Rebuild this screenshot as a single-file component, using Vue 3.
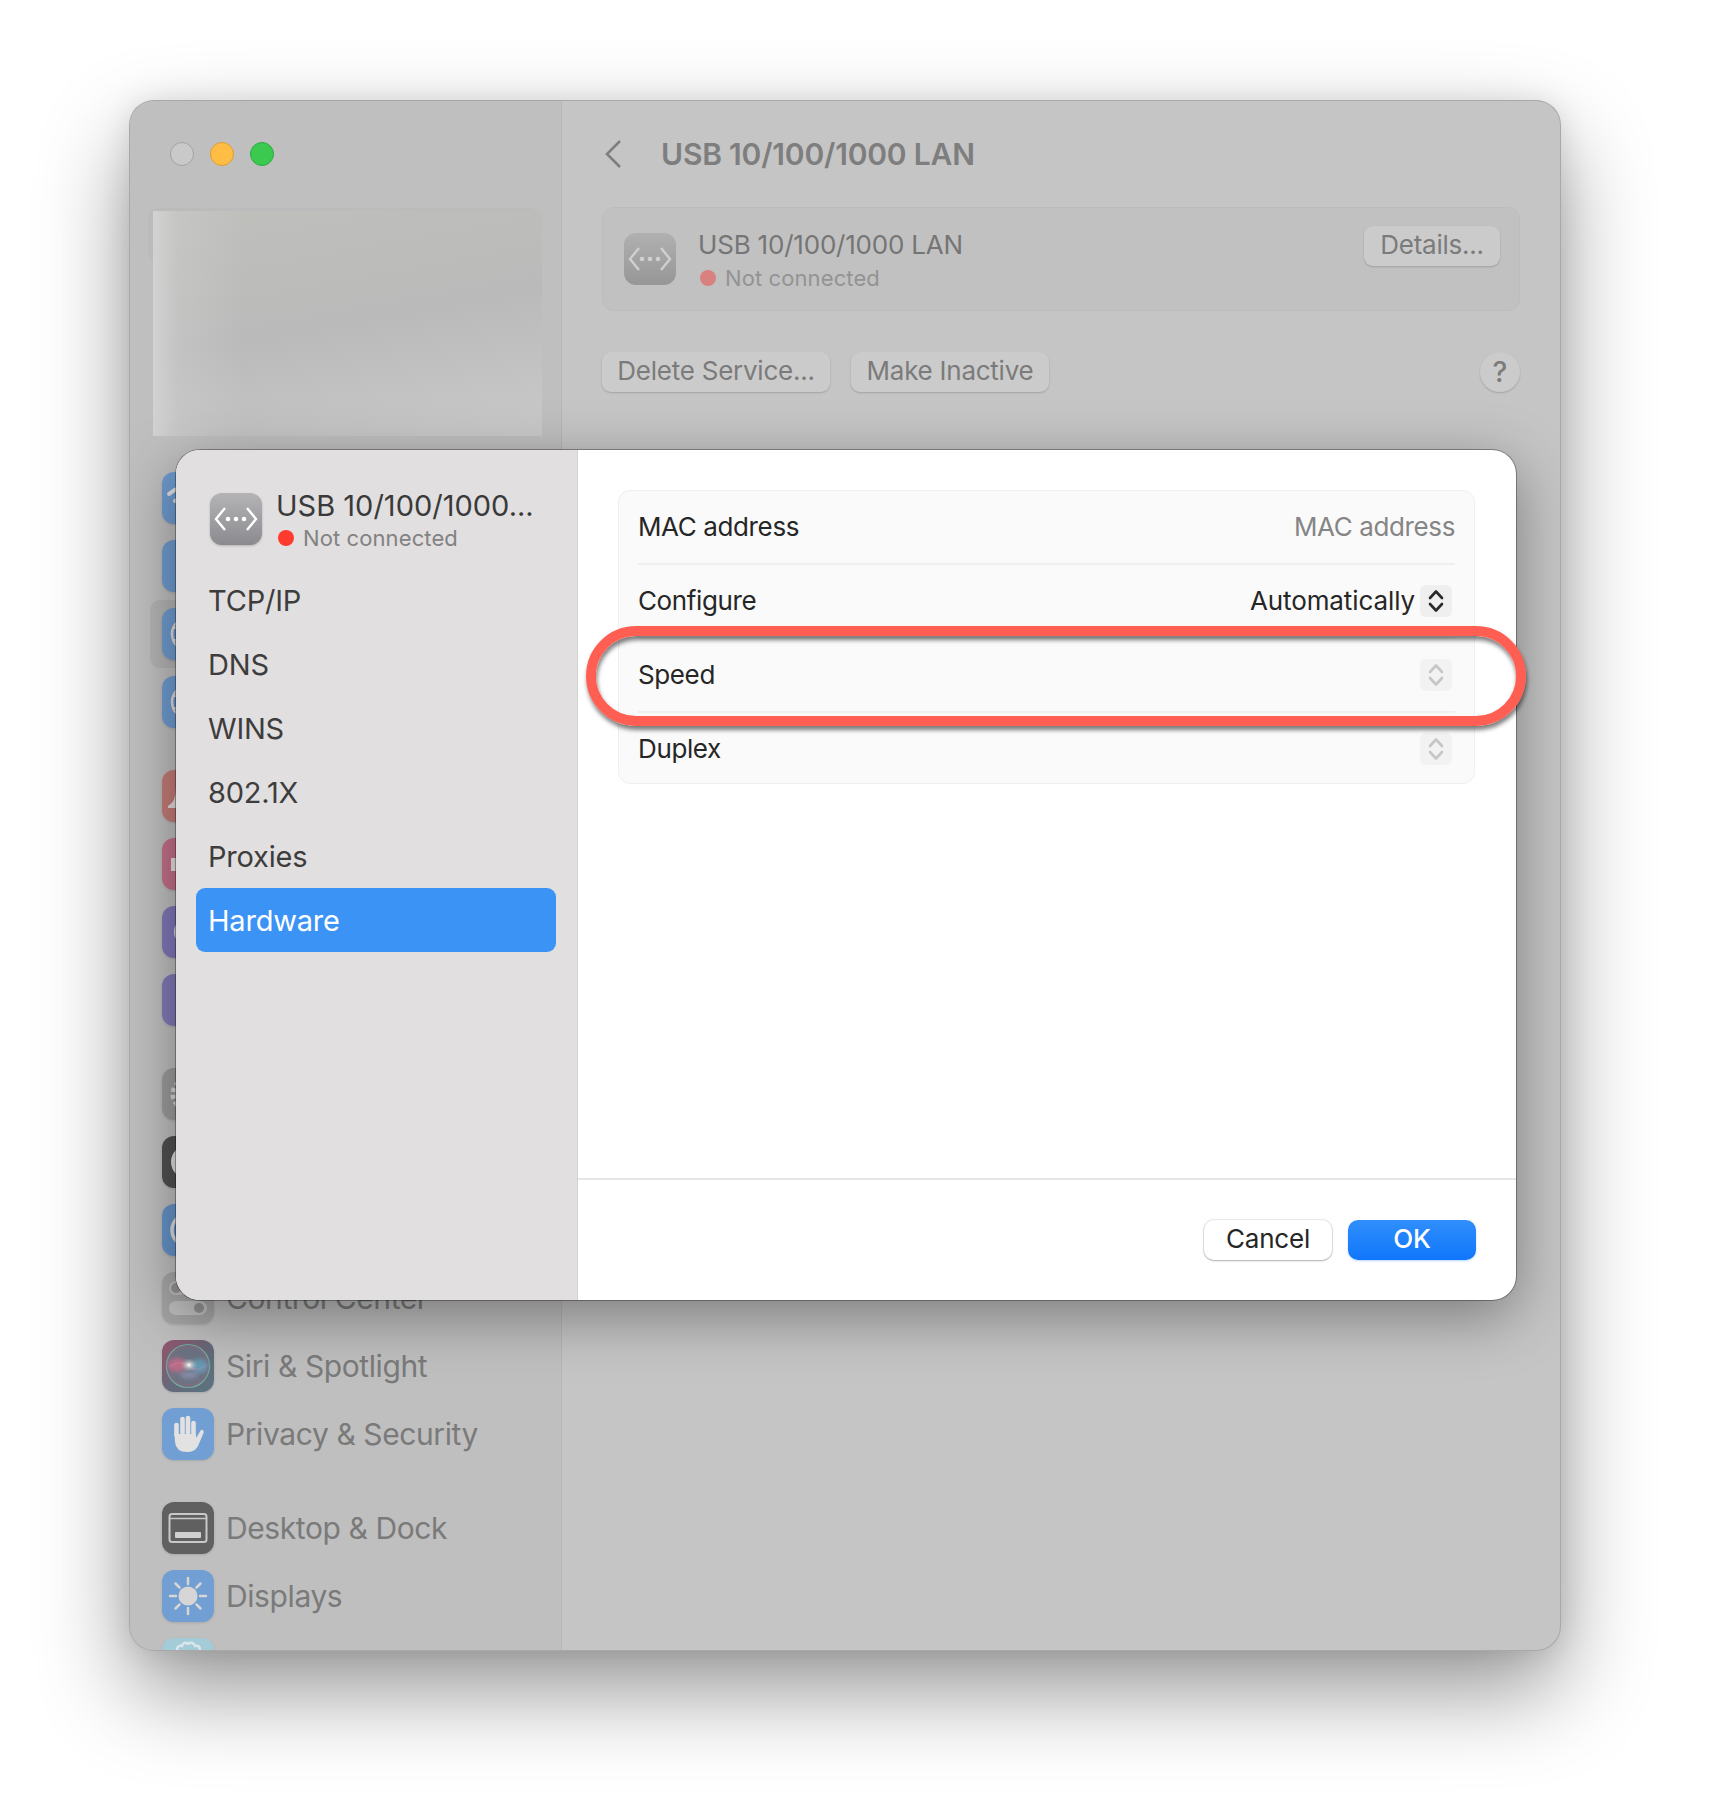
<template>
  <div class="page">
    <div class="window">
      <!-- settings sidebar, dimmed behind the sheet -->
      <aside class="sidebar">
        <div class="lights">
          <span class="light off"></span>
          <span class="light min"></span>
          <span class="light max"></span>
        </div>
        <div class="account">
          <div class="account-under"></div>
          <div class="account-blur"></div>
        </div>
        <div class="nav">
          <div v-for="(group, g) in navGroups" :key="g" class="nav-group">
            <div v-for="item in group" :key="item.icon + item.color" class="nav-row" :class="{ current: item.current }">
              <svg class="nav-icon" width="52" height="52" viewBox="0 0 52 52">
                <defs v-if="item.icon === 'siri'">
                  <linearGradient id="siriBg" x1="0" y1="0" x2="1" y2="1">
                    <stop offset="0" stop-color="#96546c" />
                    <stop offset="0.55" stop-color="#646a7a" />
                    <stop offset="1" stop-color="#5a7480" />
                  </linearGradient>
                  <filter id="siriBlur" x="-30%" y="-30%" width="160%" height="160%">
                    <feGaussianBlur stdDeviation="2.2" />
                  </filter>
                </defs>
                <rect width="52" height="52" rx="12" :fill="item.icon === 'siri' ? 'url(#siriBg)' : item.color" />
                <template v-if="item.icon === 'wifi'">
                  <path d="M7 22 Q26 6 45 22M13 29 Q26 18 39 29" fill="none" stroke="#e0e0e0" stroke-width="4" stroke-linecap="round" />
                  <circle cx="26" cy="37" r="4" fill="#e0e0e0" />
                </template>
                <template v-else-if="item.icon === 'globe'">
                  <circle cx="26" cy="26" r="16" fill="none" stroke="#dcdcdc" stroke-width="2.5" />
                  <path d="M10 20 H42M10 32 H42M26 10 Q14 26 26 42M26 10 Q38 26 26 42" fill="none" stroke="#dcdcdc" stroke-width="2" />
                </template>
                <path v-else-if="item.icon === 'bell'" d="M6 36 Q14 32 14 18 H26 V38 H6 Z" fill="#e6dcdc" />
                <rect v-else-if="item.icon === 'sound'" x="9" y="20" width="18" height="13" fill="#e8dfe2" />
                <circle v-else-if="item.icon === 'moon'" cx="26" cy="26" r="14" fill="#dcdae4" />
                <template v-else-if="item.icon === 'gear'">
                  <circle cx="26" cy="26" r="15" fill="none" stroke="#d8d8d8" stroke-width="5" stroke-dasharray="4 3" />
                  <circle cx="26" cy="26" r="11" fill="none" stroke="#d8d8d8" stroke-width="3" />
                </template>
                <circle v-else-if="item.icon === 'appearance'" cx="26" cy="26" r="17" fill="#dedede" />
                <circle v-else-if="item.icon === 'access'" cx="26" cy="26" r="16" fill="none" stroke="#dcdcdc" stroke-width="3.5" />
                <template v-else-if="item.icon === 'control'">
                  <rect x="7" y="9" width="38" height="14" rx="7" fill="#bdbdbd" />
                  <circle cx="14" cy="16" r="5" fill="#929292" />
                  <rect x="7" y="29" width="38" height="14" rx="7" fill="#c0c0c0" />
                  <circle cx="37" cy="36" r="5" fill="#929292" />
                </template>
                <template v-else-if="item.icon === 'siri'">
                  <circle cx="26" cy="26" r="21.5" fill="#6b7382" stroke="#7aa79c" stroke-width="1.2" />
                  <circle cx="26" cy="26" r="19" fill="none" stroke="#a85f7e" stroke-width="1" opacity="0.6" />
                  <g filter="url(#siriBlur)">
                    <ellipse cx="15" cy="25" rx="9" ry="7" fill="#bb6c88" />
                    <ellipse cx="38" cy="26" rx="8" ry="7" fill="#6699b4" />
                    <ellipse cx="27" cy="35" rx="9" ry="3" fill="#8a8fb0" />
                  </g>
                  <path d="M8 27 Q17 19 26 26 T44 25" fill="none" stroke="#d88aa6" stroke-width="1" opacity="0.5" />
                  <ellipse cx="27" cy="25" rx="5" ry="3.4" fill="#e6e6e6" filter="url(#siriBlur)" />
                  <circle cx="27" cy="25" r="1.8" fill="#eeeeee" />
                </template>
                <template v-else-if="item.icon === 'hand'">
                  <path d="M14.5 27 V17M20.5 25 V11M26 25 V10M31.5 26 V15" stroke="#e2e2e2" stroke-width="4.6" stroke-linecap="round" fill="none" />
                  <path d="M12.5 26 H34 V30 L39 22 Q42 21 41.5 25 L36 38 Q33 44 25 44 Q14 44 13 34 Z" fill="#e2e2e2" />
                </template>
                <template v-else-if="item.icon === 'dock'">
                  <rect x="7.5" y="12" width="37" height="28" rx="2.5" fill="none" stroke="#c8c8c8" stroke-width="2" />
                  <path d="M8 16.5 H44" stroke="#c8c8c8" stroke-width="1.5" />
                  <rect x="13" y="30" width="26" height="6" rx="1" fill="#d0d0d0" />
                </template>
                <template v-else-if="item.icon === 'sun'">
                  <circle cx="26" cy="26" r="9.5" fill="#d6d6d6" />
                  <path d="M26 8 V14M26 38 V44M8 26 H14M38 26 H44M13.5 13.5 L17.5 17.5M34.5 34.5 L38.5 38.5M38.5 13.5 L34.5 17.5M17.5 34.5 L13.5 38.5" stroke="#d6d6d6" stroke-width="2.5" stroke-linecap="round" />
                </template>
                <path v-else-if="item.icon === 'flower'" d="M15 12 Q15 7 20 8 Q22 3 26 6 Q31 3 33 8 Q38 7 38 12" fill="none" stroke="#dbe6ea" stroke-width="2.5" />
              </svg>
              <span v-if="item.label" class="nav-label">{{ item.label }}</span>
            </div>
          </div>
        </div>
      </aside>

      <!-- network detail pane, dimmed too -->
      <main class="detail">
        <div class="detail-head">
          <svg class="back" width="20" height="32" viewBox="0 0 20 32">
            <path d="M17 3 L4 16 L17 29" fill="none" stroke="#7e7e7e" stroke-width="2.6" />
          </svg>
          <h1>USB 10/100/1000 LAN</h1>
        </div>
        <div class="service-card">
          <svg width="52" height="52" viewBox="0 0 52 52" class="service-icon">
            <defs>
              <linearGradient id="dimIcon" x1="0" y1="0" x2="0" y2="1">
                <stop offset="0" stop-color="#b0b0b0" />
                <stop offset="1" stop-color="#969696" />
              </linearGradient>
            </defs>
            <rect width="52" height="52" rx="12" fill="url(#dimIcon)" />
            <path d="M15 15 L6 26 L15 37M37 15 L46 26 L37 37" fill="none" stroke="#d0d0d0" stroke-width="2.4" />
            <circle cx="18" cy="26" r="2.3" fill="#d0d0d0" />
            <circle cx="26" cy="26" r="2.3" fill="#d0d0d0" />
            <circle cx="34" cy="26" r="2.3" fill="#d0d0d0" />
          </svg>
          <div class="service-text">
            <div class="service-name">USB 10/100/1000 LAN</div>
            <div class="service-status"><span class="dot"></span>Not connected</div>
          </div>
          <button class="dim-btn details">Details...</button>
        </div>
        <div class="actions">
          <button class="dim-btn delete">Delete Service...</button>
          <button class="dim-btn inactive">Make Inactive</button>
          <button class="help">?</button>
        </div>
      </main>

      <!-- hardware sheet -->
      <div class="sheet">
        <div class="sheet-side">
          <div class="sheet-head">
            <svg width="52" height="52" viewBox="0 0 52 52" class="sheet-icon">
              <defs>
                <linearGradient id="liveIcon" x1="0" y1="0" x2="0" y2="1">
                  <stop offset="0" stop-color="#b4b4b7" />
                  <stop offset="1" stop-color="#8b8b8f" />
                </linearGradient>
              </defs>
              <rect width="52" height="52" rx="12" fill="url(#liveIcon)" />
              <path d="M15 15 L6 26 L15 37M37 15 L46 26 L37 37" fill="none" stroke="#fff" stroke-width="2.4" />
              <circle cx="18" cy="26" r="2.3" fill="#fff" />
              <circle cx="26" cy="26" r="2.3" fill="#fff" />
              <circle cx="34" cy="26" r="2.3" fill="#fff" />
            </svg>
            <div>
              <div class="sheet-name">USB 10/100/1000...</div>
              <div class="sheet-status"><span class="dot live"></span>Not connected</div>
            </div>
          </div>
          <div
            v-for="tab in tabs"
            :key="tab"
            class="tab"
            :class="{ active: tab === 'Hardware' }"
          >{{ tab }}</div>
        </div>

        <div class="sheet-main">
          <div class="form-wrap">
            <div class="form-card">
              <div v-for="row in rows" :key="row.label" class="form-row">
                <span class="form-label">{{ row.label }}</span>
                <span v-if="row.value" class="form-value" :class="{ muted: row.muted }">{{ row.value }}</span>
                <span v-if="row.stepper" class="stepper" :class="{ disabled: !row.value }">
                  <svg width="18" height="26" viewBox="0 0 18 26">
                    <path d="M3 10 L9 3.5 L15 10M3 16 L9 22.5 L15 16" fill="none" stroke="currentColor" stroke-width="2.6" stroke-linecap="round" stroke-linejoin="round" />
                  </svg>
                </span>
              </div>
            </div>
          </div>
          <div class="sheet-foot">
            <button class="foot-btn cancel">Cancel</button>
            <button class="foot-btn ok">OK</button>
          </div>
        </div>

        <!-- annotation ring round the Speed row -->
        <div class="ring"></div>
      </div>
    </div>
  </div>
</template>

<script setup>
// rows whose text sits under the sheet have no label
const navGroups = [
  [
    { icon: 'wifi', color: '#6f9ccf' },
    { icon: 'none', color: '#6f9ccf' },
    { icon: 'globe', color: '#6f9ccf', current: true },
    { icon: 'globe', color: '#6f9cd0' }
  ],
  [
    { icon: 'bell', color: '#c47c78' },
    { icon: 'sound', color: '#c4708a' },
    { icon: 'moon', color: '#7f78b8' },
    { icon: 'none', color: '#827ab6' }
  ],
  [
    { icon: 'gear', color: '#9c9c9c' },
    { icon: 'appearance', color: '#505050' },
    { icon: 'access', color: '#6694c9' },
    { label: 'Control Center', icon: 'control', color: '#a6a6a6' },
    { label: 'Siri & Spotlight', icon: 'siri', color: '#666' },
    { label: 'Privacy & Security', icon: 'hand', color: '#719fd3' }
  ],
  [
    { label: 'Desktop & Dock', icon: 'dock', color: '#606060' },
    { label: 'Displays', icon: 'sun', color: '#719fd3' },
    { icon: 'flower', color: '#a4cbd8' }
  ]
]

const tabs = ['TCP/IP', 'DNS', 'WINS', '802.1X', 'Proxies', 'Hardware']

const rows = [
  { label: 'MAC address', value: 'MAC address', muted: true },
  { label: 'Configure', value: 'Automatically', stepper: true },
  { label: 'Speed', stepper: true },
  { label: 'Duplex', stepper: true }
]
</script>

<style>
body {
  margin: 0;
  background: #fff;
}
</style>

<style scoped>
.page {
  height: 1798px;
  box-sizing: border-box;
  padding: 101px 0 0 130px;
  font-family: Inter, "Liberation Sans", sans-serif;
}
.window {
  position: relative;
  width: 1430px;
  height: 1549px;
  display: flex;
  box-sizing: border-box;
  border-radius: 24px;
  overflow: hidden;
  background: #c5c5c5;
  box-shadow: 0 0 0 1px #a8a8a8, 0 40px 90px rgba(0, 0, 0, 0.42), 0 0 30px rgba(0, 0, 0, 0.1);
}
.sidebar {
  width: 432px;
  flex: none;
  box-sizing: border-box;
  background: #bfbfbf;
  border-right: 1px solid #b7b7b7;
  padding-top: 41px;
}
.lights {
  display: flex;
  gap: 16px;
  padding-left: 40px;
}
.light {
  width: 24px;
  height: 24px;
  box-sizing: border-box;
  border-radius: 50%;
  border: 1px solid transparent;
}
.light.off {
  background: #c9c9c9;
  border-color: #a2a2a2;
}
.light.min {
  background: #ffbd45;
  border-color: #dd9d2e;
}
.light.max {
  background: #3bc950;
  border-color: #2cab3e;
}
.account {
  position: relative;
  margin: 45px 0 0 23px;
  width: 389px;
  height: 225px;
}
.account-under {
  position: absolute;
  left: -5px;
  top: -3px;
  width: 392px;
  height: 54px;
  border-radius: 10px;
  background: #bbbbbb;
}
.account-blur {
  position: absolute;
  inset: 0;
  background:
    linear-gradient(90deg, #d2d2d2 0, rgba(205, 205, 205, 0.45) 25px, rgba(200, 200, 200, 0) 90px),
    linear-gradient(170deg, #bfbfbc 0, #bababa 50%, #cacaca 100%);
}
.nav {
  margin-top: 28px;
  padding-left: 20px;
}
.nav-group + .nav-group {
  margin-top: 26px;
}
.nav-row {
  height: 68px;
  box-sizing: border-box;
  display: flex;
  align-items: center;
  gap: 12px;
  padding-left: 12px;
  border-radius: 10px;
}
.nav-row.current {
  background: #b4b4b4;
  margin-right: 20px;
}
.nav-icon {
  flex: none;
  filter: drop-shadow(0 1px 1px rgba(0, 0, 0, 0.12));
}
.nav-label {
  font-size: 30px;
  color: #7a7a7a;
  letter-spacing: -0.4px;
}
.detail {
  flex: 1;
  box-sizing: border-box;
  padding: 0 40px;
  color: #7c7c7c;
}
.detail-head {
  height: 106px;
  display: flex;
  align-items: center;
}
.back {
  margin-left: 1px;
  flex: none;
}
.detail-head h1 {
  margin: -1px 0 0 38px;
  font-size: 30px;
  font-weight: 600;
  letter-spacing: -0.2px;
  color: #7e7e7e;
}
.service-card {
  height: 104px;
  box-sizing: border-box;
  display: flex;
  align-items: center;
  padding: 0 19px 0 21px;
  background: #c1c1c1;
  border: 1px solid #bcbcbc;
  border-radius: 12px;
}
.service-icon {
  flex: none;
}
.service-text {
  margin: 2px 0 0 22px;
}
.service-name {
  font-size: 26px;
  line-height: 32px;
  letter-spacing: -0.2px;
  color: #757575;
}
.service-status {
  display: flex;
  align-items: center;
  margin-top: 3px;
  font-size: 22px;
  line-height: 28px;
  letter-spacing: 0.1px;
  color: #939393;
}
.dot {
  width: 16px;
  height: 16px;
  border-radius: 50%;
  background: #d98080;
  margin: 0 9px 0 2px;
  flex: none;
}
.dot.live {
  background: #ff3b30;
}
.dim-btn {
  height: 40px;
  box-sizing: border-box;
  padding: 0 0 3px;
  border: none;
  border-radius: 9px;
  background: #cbcbcb;
  color: #7b7b7b;
  font: 26px Inter, "Liberation Sans", sans-serif;
  letter-spacing: -0.25px;
  box-shadow: 0 1px 2px rgba(0, 0, 0, 0.18);
}
.details {
  margin-left: auto;
  width: 136px;
  align-self: flex-start;
  margin-top: 18px;
}
.actions {
  display: flex;
  align-items: center;
  gap: 21px;
  margin-top: 41px;
}
.delete {
  width: 228px;
}
.inactive {
  width: 198px;
}
.help {
  margin-left: auto;
  width: 40px;
  height: 40px;
  padding: 0;
  border: none;
  border-radius: 50%;
  background: #cbcbcb;
  color: #7b7b7b;
  font: 500 28px Inter, "Liberation Sans", sans-serif;
  box-shadow: 0 1px 2px rgba(0, 0, 0, 0.18);
}
.sheet {
  position: absolute;
  left: 46px;
  top: 349px;
  width: 1340px;
  height: 850px;
  display: flex;
  border-radius: 24px;
  background: #fff;
  box-shadow: 0 0 0 1px rgba(0, 0, 0, 0.32), 0 16px 60px rgba(0, 0, 0, 0.38);
}
.sheet-side {
  width: 402px;
  flex: none;
  box-sizing: border-box;
  padding: 0 21px 0 20px;
  background: #e1dfe0;
  border-right: 1px solid #d2d2d2;
  border-radius: 24px 0 0 24px;
}
.sheet-head {
  height: 118px;
  box-sizing: border-box;
  display: flex;
  align-items: flex-start;
  gap: 14px;
  padding: 43px 0 0 14px;
}
.sheet-icon {
  flex: none;
  filter: drop-shadow(0 1px 1px rgba(0, 0, 0, 0.2));
}
.sheet-name {
  font-size: 29px;
  line-height: 34px;
  margin-top: -4px;
  color: #3a3a3a;
  white-space: nowrap;
}
.sheet-status {
  display: flex;
  align-items: center;
  margin-top: 1px;
  font-size: 22px;
  line-height: 28px;
  letter-spacing: 0.1px;
  color: #828282;
}
.tab {
  height: 64px;
  box-sizing: border-box;
  padding-left: 12px;
  display: flex;
  align-items: center;
  border-radius: 9px;
  font-size: 29px;
  color: #3d3d3d;
  letter-spacing: -0.2px;
}
.tab.active {
  background: #3b93f5;
  color: #fff;
}
.sheet-main {
  flex: 1;
  display: flex;
  flex-direction: column;
}
.form-wrap {
  flex: 1;
  padding: 40px 41px 0 40px;
  border-bottom: 2px solid #e6e6e6;
}
.form-card {
  background: #fafafa;
  border: 1px solid #efefef;
  border-radius: 12px;
  padding: 0 19px;
}
.form-row {
  height: 74px;
  box-sizing: border-box;
  display: flex;
  align-items: center;
  padding-bottom: 2px;
  font-size: 26px;
  color: #262626;
  letter-spacing: -0.38px;
}
.form-row:first-child {
  height: 72px;
}
.form-row:last-child {
  height: 72px;
  padding-bottom: 0;
}
.form-row + .form-row {
  border-top: 2px solid #efefef;
}
.form-label {
  margin-right: auto;
}
.form-value {
  letter-spacing: -0.1px;
}
.form-value.muted {
  color: #858585;
  letter-spacing: -0.38px;
}
.stepper {
  width: 32px;
  height: 32px;
  margin: 2px 3px 0 5px;
  border-radius: 6px;
  background: #efefef;
  display: flex;
  align-items: center;
  justify-content: center;
  color: #2a2a2a;
}
.stepper.disabled {
  color: #c6c6c6;
  background: #f2f2f2;
}
.sheet-foot {
  height: 120px;
  box-sizing: border-box;
  display: flex;
  justify-content: flex-end;
  gap: 16px;
  padding: 40px 40px 0 0;
}
.foot-btn {
  width: 128px;
  height: 40px;
  padding: 0 0 3px;
  border: none;
  border-radius: 10px;
  font: 26px Inter, "Liberation Sans", sans-serif;
  letter-spacing: -0.2px;
}
.cancel {
  background: #fff;
  color: #262626;
  box-shadow: 0 0 0 1px rgba(0, 0, 0, 0.08), 0 1px 2px rgba(0, 0, 0, 0.25);
}
.ok {
  background: linear-gradient(#308ffc, #1076fb);
  color: #fff;
  font-weight: 500;
  box-shadow: 0 1px 2px rgba(16, 118, 251, 0.3);
}
.ring {
  position: absolute;
  left: 410px;
  top: 176px;
  width: 940px;
  height: 100px;
  box-sizing: border-box;
  border: 10px solid #ff5f52;
  border-radius: 50px;
  box-shadow: 1px 4px 4px rgba(0, 0, 0, 0.5), inset 1px 4px 4px rgba(0, 0, 0, 0.5);
}
</style>
